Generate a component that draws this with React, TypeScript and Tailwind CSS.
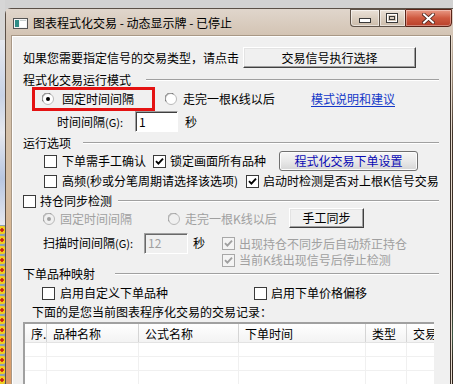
import React from "react";

function Checkbox({ checked, disabled }: { checked?: boolean; disabled?: boolean }) {
  return (
    <span
      className={`flex h-[13px] w-[13px] shrink-0 items-center justify-center border ${
        disabled ? "border-[#a8a8a8] bg-[#f4f4f4]" : "border-[#3a3a3a] bg-white"
      }`}
    >
      {checked && (
        <svg width="9" height="9" viewBox="0 0 9 9">
          <path
            d="M1 4.2 L3.4 6.6 L8 1.6"
            fill="none"
            stroke={disabled ? "#a0a0a0" : "#000"}
            strokeWidth="1.9"
          />
        </svg>
      )}
    </span>
  );
}

function Radio({ checked, disabled }: { checked?: boolean; disabled?: boolean }) {
  return (
    <svg width="12" height="12" viewBox="0 0 12 12" className="shrink-0">
      <circle cx="6" cy="6" r="5.5" fill={disabled ? "#f0f0f0" : "#fff"} stroke="#b8b8b8" />
      <path d="M1.2 8.5 A5.2 5.2 0 0 1 8.5 1.2" stroke={disabled ? "#a0a0a0" : "#707070"} fill="none" />
      {checked && <circle cx="6" cy="6" r="2" fill={disabled ? "#a0a0a0" : "#000"} />}
    </svg>
  );
}

function EtchedLine() {
  return <div className="h-[2px] flex-1 border-t border-t-[#a0a0a0] border-b border-b-white" />;
}

const classicBtn =
  "flex items-center justify-center bg-[#f0f0f0] border border-t-white border-l-white border-r-[#404040] border-b-[#404040] shadow-[inset_-1px_-1px_0_#a0a0a0,inset_1px_1px_0_#e3e3e3]";

function TitleIcon() {
  return (
    <svg width="15" height="11" viewBox="0 0 15 11">
      <rect x="0.5" y="0.5" width="14" height="10" fill="#f4f4f4" stroke="#555" />
      <rect x="2" y="2" width="4" height="7" fill="#2f8c86" />
      <rect x="7" y="2" width="6" height="7" fill="#ffffff" />
      <rect x="7" y="2" width="6" height="1" fill="#c8d0d0" />
    </svg>
  );
}

function CaptionButtons() {
  return (
    <div className="flex h-[18px]">
      <div className="flex h-full w-[29px] items-center justify-center rounded-bl-[4px] border border-r-0 border-[#5e5248] bg-gradient-to-b from-[#ebe2d8] to-[#cbbba9] shadow-[inset_0_0_0_1px_rgba(255,255,255,0.55)]">
        <svg width="12" height="5" viewBox="0 0 12 5" className="mt-[4px]">
          <rect x="0.5" y="0.5" width="11" height="4" fill="#fff" stroke="#3a3a3a" />
        </svg>
      </div>
      <div className="flex h-full w-[26px] items-center justify-center border border-r-0 border-[#5e5248] bg-gradient-to-b from-[#ebe2d8] to-[#cbbba9] shadow-[inset_0_0_0_1px_rgba(255,255,255,0.55)]">
        <svg width="12" height="10" viewBox="0 0 12 10">
          <rect x="0.5" y="0.5" width="11" height="9" fill="none" stroke="#3a3a3a" />
          <rect x="1.5" y="1.5" width="9" height="7" fill="none" stroke="#fff" />
          <rect x="3.5" y="3.5" width="5" height="3" fill="none" stroke="#3a3a3a" />
        </svg>
      </div>
      <div className="flex h-full w-[47px] items-center justify-center rounded-br-[4px] border border-[#5a2418] bg-gradient-to-b from-[#e99a86] via-[#cf5a40] to-[#b8402a] shadow-[inset_0_0_0_1px_rgba(255,255,255,0.35)]">
        <svg width="13" height="11" viewBox="0 0 13 11">
          <path d="M2 1.5 L11 9.5 M11 1.5 L2 9.5" stroke="#4a2018" strokeWidth="3.6" strokeLinecap="square" />
          <path d="M2 1.5 L11 9.5 M11 1.5 L2 9.5" stroke="#fff" strokeWidth="2" strokeLinecap="square" />
        </svg>
      </div>
    </div>
  );
}

function Cells({ header }: { header?: boolean }) {
  const cols: [string, string][] = [
    ["w-[22px]", "序."],
    ["w-[92px]", "品种名称"],
    ["w-[100px]", "公式名称"],
    ["w-[127px]", "下单时间"],
    ["w-[41px]", "类型"],
    ["w-[60px]", "交易"],
  ];
  return (
    <>
      {cols.map(([w, t], i) => (
        <div
          key={i}
          className={`${w} shrink-0 overflow-hidden whitespace-nowrap border-r ${
            header ? "border-[#d5d5d5] pl-[6px] leading-[19px]" : "border-[#f0f0f0]"
          } ${i === 0 && header ? "pl-[5px]" : ""}`}
        >
          {header ? t : ""}
        </div>
      ))}
    </>
  );
}

export default function App() {
  return (
    <div className="flex h-[384px] w-[453px] overflow-hidden bg-[#d2d2d2] font-['Noto_Sans_CJK_SC','Noto_Sans',sans-serif] text-[12px] text-black">
      {/* desktop strip on the left */}
      <div className="flex w-[5px] shrink-0 flex-col">
        <div className="h-[40px] bg-[#d6d6d6]" />
        <div className="h-[185px] bg-[linear-gradient(to_bottom,#e6e8ee_0%,#c9d3e6_30%,#e6e8ee_50%,#b8c6e0_75%,#e6e8ee_100%)]" />
        <div className="flex-1 bg-[#8f9db3] bg-[radial-gradient(circle_at_2px_5px,#c8201a_0_1.5px,#f0cf20_2px_4px,transparent_4.5px)] bg-[length:5px_10px]" />
      </div>

      {/* window */}
      <div className="mt-[8px] flex flex-1 flex-col rounded-tl-[6px] border-l border-t border-[#5b5047] bg-[#d6c8b9]">
        {/* title bar */}
        <div className="flex h-[26px] shrink-0 items-start bg-gradient-to-b from-[#e0d6cc] to-[#d3c4b4]">
          <div className="ml-[7px] mt-[9px]">
            <TitleIcon />
          </div>
          <div className="ml-[5px] mt-[6px] whitespace-nowrap leading-[16px]">
            图表程式化交易 - 动态显示牌 - 已停止
          </div>
          <div className="ml-auto mr-[7px]">
            <CaptionButtons />
          </div>
        </div>

        <div className="flex min-h-0 flex-1">
          {/* left frame */}
          <div className="w-[5px] shrink-0 bg-[linear-gradient(to_bottom,#d3c4b4_0%,#d6bea2_45%,#dcaa7a_75%,#d99c68_100%)]" />

          {/* client area */}
          <div className="flex min-w-0 flex-1 flex-col border-l border-t border-r border-l-[#a89886] border-t-[#a89886] border-r-[#3b3029] bg-[#f0f0f0] pl-[11px] pr-[11px] shadow-[inset_1px_1px_0_#ffffff]">
            {/* row 1 */}
            <div className="mt-[11px] flex h-[21px] shrink-0 items-center">
              <span className="w-[220px] shrink-0 whitespace-nowrap">如果您需要指定信号的交易类型，请点击</span>
              <button className={`${classicBtn} h-[21px] w-[173px]`}>交易信号执行选择</button>
            </div>

            {/* group 1 */}
            <div className="mt-[5px] flex h-[14px] shrink-0 items-center">
              <span className="w-[123px] shrink-0 whitespace-nowrap">程式化交易运行模式</span>
              <EtchedLine />
            </div>

            <div className="flex h-[24px] shrink-0 items-center">
              <div className="ml-[9px] flex h-[24px] w-[123px] shrink-0 items-center border-[3px] border-[#e41212]">
                <span className="ml-[7px]">
                  <Radio checked />
                </span>
                <span className="ml-[8px] whitespace-nowrap">固定时间间隔</span>
              </div>
              <span className="ml-[10px]">
                <Radio />
              </span>
              <span className="ml-[6px] w-[128px] shrink-0 whitespace-nowrap">走完一根K线以后</span>
              <span className="whitespace-nowrap text-[#1438c8] underline underline-offset-2">模式说明和建议</span>
            </div>

            <div className="flex h-[21px] shrink-0 items-center">
              <span className="ml-[34px] w-[78px] shrink-0 whitespace-nowrap">
                时间间隔<span className="text-[11px]">(G):</span>
              </span>
              <div className="flex h-[21px] w-[43px] items-center border border-t-[#a0a0a0] border-l-[#a0a0a0] border-r-white border-b-white bg-white pl-[3px] shadow-[inset_1px_1px_0_#404040]">
                1
              </div>
              <span className="ml-[7px]">秒</span>
            </div>

            {/* group 2 */}
            <div className="mt-[4px] flex h-[14px] shrink-0 items-center">
              <span className="w-[60px] shrink-0 whitespace-nowrap">运行选项</span>
              <EtchedLine />
            </div>

            <div className="mt-[1px] flex h-[20px] shrink-0 items-center">
              <span className="ml-[21px]">
                <Checkbox />
              </span>
              <span className="ml-[5px] w-[91px] shrink-0 whitespace-nowrap">下单需手工确认</span>
              <Checkbox checked />
              <span className="ml-[4px] w-[109px] shrink-0 whitespace-nowrap">锁定画面所有品种</span>
              <button className="flex h-[20px] w-[139px] items-center justify-center rounded-[3px] border border-[#707070] bg-gradient-to-b from-[#f6f6f6] via-[#e9e9e9] to-[#d6d6d6] text-[#0a0ab4] shadow-[inset_0_0_0_1px_#fcfcfc]">
                程式化交易下单设置
              </button>
            </div>

            <div className="mt-[1px] flex h-[18px] shrink-0 items-center">
              <span className="ml-[21px]">
                <Checkbox />
              </span>
              <span className="ml-[5px] w-[184px] shrink-0 whitespace-nowrap">高频(秒或分笔周期请选择该选项)</span>
              <Checkbox checked />
              <span className="ml-[4px] whitespace-nowrap">启动时检测是否对上根K信号交易</span>
            </div>

            {/* group 3 */}
            <div className="mt-[4px] flex h-[14px] shrink-0 items-center">
              <Checkbox />
              <span className="ml-[4px] w-[78px] shrink-0 whitespace-nowrap">持仓同步检测</span>
              <EtchedLine />
            </div>

            <div className="flex h-[22px] shrink-0 items-center text-[#a0a0a0]">
              <span className="ml-[20px]">
                <Radio checked disabled />
              </span>
              <span className="ml-[5px] w-[108px] shrink-0 whitespace-nowrap">固定时间间隔</span>
              <Radio disabled />
              <span className="ml-[5px] w-[104px] shrink-0 whitespace-nowrap">走完一根K线以后</span>
              <button className={`${classicBtn} h-[20px] w-[75px] self-start text-black`}>手工同步</button>
            </div>

            <div className="mt-[2px] flex shrink-0 items-start">
              <div className="flex h-[22px] items-center">
                <span className="ml-[20px] w-[101px] shrink-0 whitespace-nowrap">
                  扫描时间间隔<span className="text-[11px]">(G):</span>
                </span>
                <div className="flex h-[21px] w-[44px] items-center border border-t-[#a0a0a0] border-l-[#a0a0a0] border-r-white border-b-white bg-[#f0f0f0] pl-[3px] text-[#a0a0a0] shadow-[inset_1px_1px_0_#696969]">
                  12
                </div>
                <span className="ml-[5px] w-[29px] shrink-0">秒</span>
              </div>
              <div className="mt-[3px] flex flex-col text-[#a0a0a0]">
                <div className="flex h-[17px] items-center">
                  <Checkbox checked disabled />
                  <span className="ml-[4px] whitespace-nowrap">出现持仓不同步后自动矫正持仓</span>
                </div>
                <div className="flex h-[16px] items-center">
                  <Checkbox checked disabled />
                  <span className="ml-[4px] whitespace-nowrap">当前K线出现信号后停止检测</span>
                </div>
              </div>
            </div>

            {/* group 4 */}
            <div className="flex h-[12px] shrink-0 items-center">
              <span className="w-[92px] shrink-0 whitespace-nowrap">下单品种映射</span>
              <EtchedLine />
            </div>

            <div className="mt-[6px] flex h-[14px] shrink-0 items-center">
              <span className="ml-[19px]">
                <Checkbox />
              </span>
              <span className="ml-[5px] w-[194px] shrink-0 whitespace-nowrap">启用自定义下单品种</span>
              <Checkbox />
              <span className="ml-[4px] whitespace-nowrap">启用下单价格偏移</span>
            </div>

            <div className="mt-[5px] flex h-[14px] shrink-0 items-center">
              <span className="ml-[9px] whitespace-nowrap">下面的是您当前图表程序化交易的交易记录：</span>
            </div>

            {/* list */}
            <div className="mt-[3px] flex min-h-0 w-[411px] flex-1 flex-col overflow-hidden border-l-2 border-t-2 border-[#a0a0a0] bg-white">
              <div className="flex h-[19px] shrink-0 border-b border-[#e3e3e3] bg-gradient-to-b from-white to-[#f3f3f3]">
                <Cells header />
              </div>
              {[0, 1, 2, 3].map((r) => (
                <div key={r} className="flex h-[14px] shrink-0 border-b border-[#f0f0f0]">
                  <Cells />
                </div>
              ))}
            </div>
          </div>

          {/* right frame */}
          <div className="w-[8px] shrink-0 bg-[linear-gradient(to_bottom,#d3c4b4_0%,#9c8b79_12%,#43352b_28%,#2f241c_75%,#3e5644_86%,#2e231b_94%)] shadow-[inset_1px_0_0_#e8dccf]" />
        </div>
      </div>
    </div>
  );
}
